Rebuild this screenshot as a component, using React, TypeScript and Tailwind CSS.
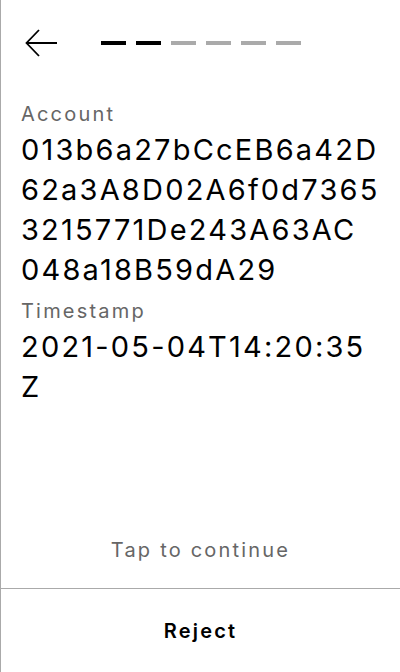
import React from 'react';

// lines follow the wrap of the device screen
const fields = [
  {
    label: 'Account',
    lines: ['013b6a27bCcEB6a42D', '62a3A8D02A6f0d7365', '3215771De243A63AC', '048a18B59dA29'],
  },
  { label: 'Timestamp', lines: ['2021-05-04T14:20:35', 'Z'] },
];

const steps = [true, true, false, false, false, false];

export default function App() {
  return (
    <div
      className="flex flex-col h-[672px] w-[400px] bg-white border-l border-[#aaaaaa] text-black tracking-[2.2px]"
      style={{ fontFamily: 'Inter, "Noto Sans", sans-serif' }}
    >
      <div className="flex items-center h-[86px] pl-[24px] pr-[20px]">
        <svg width="32" height="28" viewBox="0 0 32 28" fill="none" className="shrink-0">
          <path d="M32 14H2M14 1L1.5 14L14 27" stroke="black" strokeWidth="1.8" />
        </svg>
        <div className="flex gap-[10px] ml-[44px]">
          {steps.map((done, idx) => (
            <div
              key={`step-${idx}`}
              className={done ? 'w-[25px] h-[4px] bg-black' : 'w-[25px] h-[4px] bg-[#aaaaaa]'}
            />
          ))}
        </div>
      </div>

      <div className="flex flex-col gap-[7px] pl-[20px] pr-[16px] pt-[14px]">
        {fields.map((field) => (
          <div key={field.label} className="flex flex-col gap-[2px]">
            <div className="text-[20px] leading-[28px] text-[#666666]">{field.label}</div>
            <div className="flex flex-col text-[29px] leading-[40px] tracking-[2.2px]">
              {field.lines.map((line) => (
                <span key={line} className="whitespace-nowrap">
                  {line}
                </span>
              ))}
            </div>
          </div>
        ))}
      </div>

      <div className="flex-1" />

      <div className="text-center text-[20px] leading-[28px] text-[#666666] pb-[24px]">Tap to continue</div>
      <div className="h-[1px] bg-[#aaaaaa]" />
      <button className="h-[83px] text-[20px] font-semibold text-black tracking-[2.2px]">Reject</button>
    </div>
  );
}
